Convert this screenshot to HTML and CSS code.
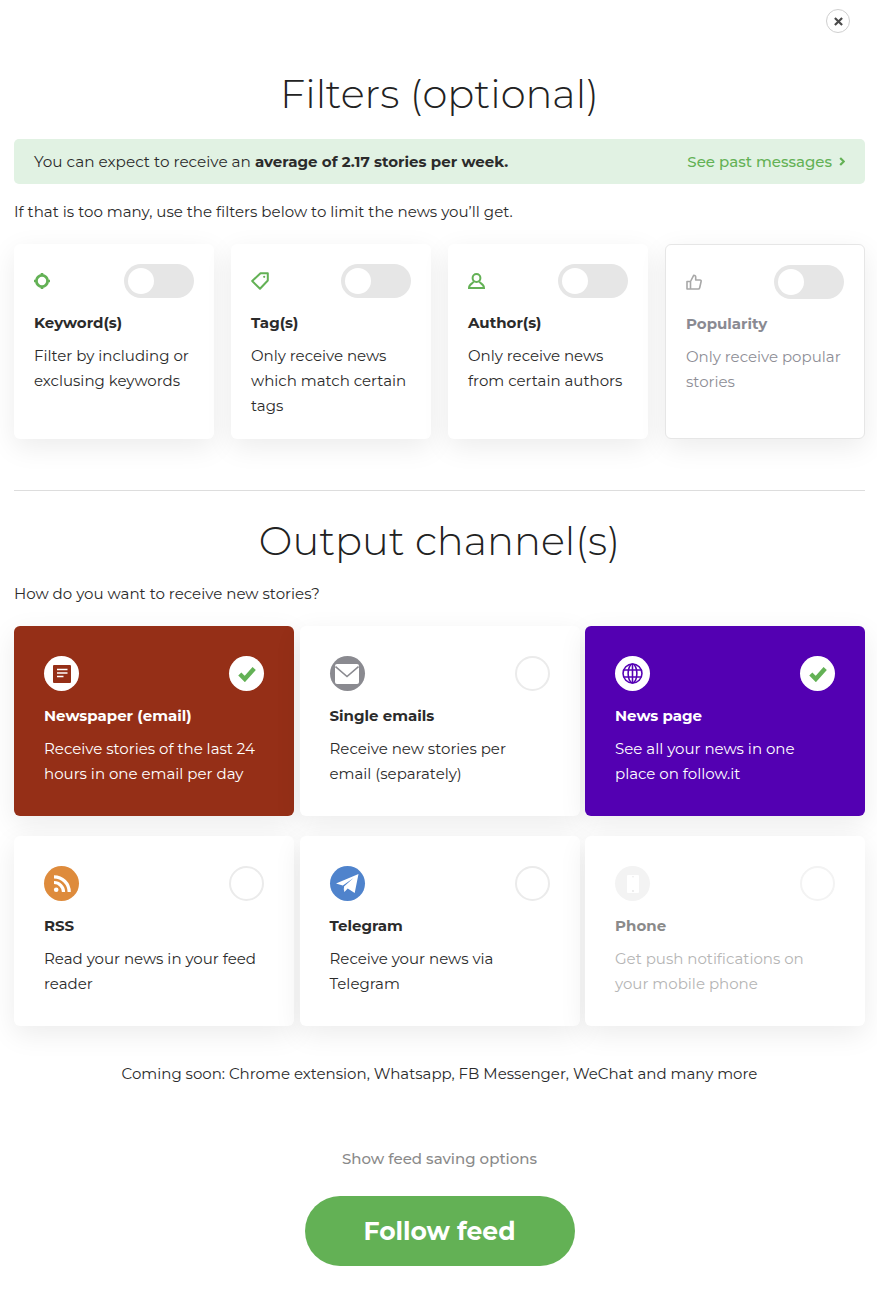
FILE: index.html
```html
<!DOCTYPE html>
<html lang="en">
<head>
<meta charset="utf-8">
<title>Filters</title>
<link rel="stylesheet" href="styles.css">
</head>
<body>
<main class="page">
  <div class="close-row">
    <button class="close" aria-label="Close"><svg viewBox="0 0 10 10" width="9" height="9"><path d="M1 1l8 8M9 1l-8 8" stroke="#4a4a4a" stroke-width="2.400" fill="none"/></svg></button>
  </div>
  <h1 class="title first">Filters (optional)</h1>
  <div class="notice">
    <span>You can expect to receive an <b>average of 2.17 stories per week.</b></span>
    <a class="past">See past messages <svg viewBox="0 0 6 10" width="6" height="9"><path d="M1 1l4 4-4 4" stroke="#63b155" stroke-width="2.400" fill="none"/></svg></a>
  </div>
  <p class="lead">If that is too many, use the filters below to limit the news you’ll get.</p>
  <section class="filters">
    <article class="fcard">
      <div class="fhead">
        <svg class="ficon" viewBox="0 0 16 16" width="16" height="16"><circle cx="8" cy="8" r="5.600" fill="none" stroke="#63b155" stroke-width="2.800"/><path d="M8 0v3M8 13v3M0 8h3M13 8h3" stroke="#63b155" stroke-width="2.600"/></svg>
        <span class="toggle"></span>
      </div>
      <h3>Keyword(s)</h3>
      <p>Filter by including or exclusing keywords</p>
    </article>
    <article class="fcard">
      <div class="fhead">
        <svg class="ficon" viewBox="0 0 18 18" width="18" height="18"><path d="M9.500 1.200h7.300v7.300l-7.800 8.300-7.800-7.800z" fill="none" stroke="#63b155" stroke-width="2" stroke-linejoin="round"/><circle cx="13.200" cy="4.800" r="1.100" fill="#63b155"/></svg>
        <span class="toggle"></span>
      </div>
      <h3>Tag(s)</h3>
      <p>Only receive news which match certain tags</p>
    </article>
    <article class="fcard">
      <div class="fhead">
        <svg class="ficon" viewBox="0 0 17 16" width="17" height="16"><circle cx="8.500" cy="5" r="3.900" fill="none" stroke="#63b155" stroke-width="2"/><path d="M5.800 8.500C5 10.500 1 10.800 1 15h15c0-4.200-4-4.500-4.800-6.500" fill="none" stroke="#63b155" stroke-width="2"/></svg>
        <span class="toggle"></span>
      </div>
      <h3>Author(s)</h3>
      <p>Only receive news from certain authors</p>
    </article>
    <article class="fcard muted">
      <div class="fhead">
        <svg class="ficon" viewBox="0 0 16 16" width="16" height="16"><path d="M1 7.500h3.500V15H1zM4.500 7.500L7.800 1.200c1.300 0 1.900.9 1.900 2V6h4.300c1 0 1.300.7 1.100 1.500l-1.400 6.200c-.2.900-.7 1.300-1.500 1.300H4.500" fill="none" stroke="#a8a8a8" stroke-width="1.600" stroke-linejoin="round"/></svg>
        <span class="toggle"></span>
      </div>
      <h3>Popularity</h3>
      <p>Only receive popular stories</p>
    </article>
  </section>
  <hr class="rule">
  <h1 class="title second">Output channel(s)</h1>
  <p class="lead tight">How do you want to receive new stories?</p>
  <section class="channels">
    <article class="ccard brown">
      <div class="chead">
        <span class="badge white"><svg viewBox="0 0 18 18" width="18" height="18"><rect width="18" height="18" rx="1" fill="#952f17"/><path d="M4 4.500h10.500M4 8h10.500M4 11.500h6.500" stroke="#fff" stroke-width="1.500"/></svg></span>
        <span class="radio on"><svg viewBox="0 0 18 16" width="18" height="16"><path d="M1.800 8l5 5L16.200 2.500" stroke="#63b155" stroke-width="4.400" fill="none"/></svg></span>
      </div>
      <h3>Newspaper (email)</h3>
      <p>Receive stories of the last 24 hours in one email per day</p>
    </article>
    <article class="ccard">
      <div class="chead">
        <span class="badge grey"><svg viewBox="0 0 24 20" width="24" height="20"><rect y="0" width="24" height="20" rx="2" fill="#fff"/><path d="M.5 2.500L12 12.500 23.500 2.500" stroke="#8a8a90" stroke-width="1.600" fill="none"/></svg></span>
        <span class="radio"></span>
      </div>
      <h3>Single emails</h3>
      <p>Receive new stories per email (separately)</p>
    </article>
    <article class="ccard purple">
      <div class="chead">
        <span class="badge white"><svg viewBox="0 0 24 24" width="21" height="21" fill="none" stroke="#5500b4" stroke-width="1.800"><circle cx="12" cy="12" r="10.800"/><ellipse cx="12" cy="12" rx="5" ry="10.800"/><path d="M2 8h20M2 16h20M12 1v22"/></svg></span>
        <span class="radio on"><svg viewBox="0 0 18 16" width="18" height="16"><path d="M1.800 8l5 5L16.200 2.500" stroke="#63b155" stroke-width="4.400" fill="none"/></svg></span>
      </div>
      <h3>News page</h3>
      <p>See all your news in one place on follow.it</p>
    </article>
    <article class="ccard">
      <div class="chead">
        <span class="badge orange"><svg viewBox="0 0 20 20" width="20" height="20"><circle cx="4.200" cy="15.800" r="2.300" fill="#fff"/><path d="M2 8.500a9.500 9.500 0 0 1 9.500 9.500M2 2.800a15.200 15.200 0 0 1 15.200 15.200" stroke="#fff" stroke-width="3.200" fill="none"/></svg></span>
        <span class="radio"></span>
      </div>
      <h3>RSS</h3>
      <p>Read your news in your feed reader</p>
    </article>
    <article class="ccard">
      <div class="chead">
        <span class="badge blue"><svg viewBox="0 0 24 22" width="24" height="22"><path fill="#fff" d="M1 10.500L23.500 1l-3.800 19-7-4.500-3.300 3.500-1.700-6.500z"/><path fill="#4f83cc" d="M9 13.500l9.500-8.500-11 7.800 1.600 5.500z"/></svg></span>
        <span class="radio"></span>
      </div>
      <h3>Telegram</h3>
      <p>Receive your news via Telegram</p>
    </article>
    <article class="ccard faded">
      <div class="chead">
        <span class="badge pale"><svg viewBox="0 0 12 18" width="12" height="18"><rect width="12" height="18" rx="1" fill="#fff"/><circle cx="6" cy="1.800" r=".7" fill="#e4e4e4"/><circle cx="6" cy="16" r=".9" fill="#e4e4e4"/></svg></span>
        <span class="radio"></span>
      </div>
      <h3>Phone</h3>
      <p>Get push notifications on your mobile phone</p>
    </article>
  </section>
  <p class="soon">Coming soon: Chrome extension, Whatsapp, FB Messenger, WeChat and many more</p>
  <p class="saving">Show feed saving options</p>
  <div class="cta"><button class="follow">Follow feed</button></div>
</main>
</body>
</html>
```
FILE: styles.css
```css
* { box-sizing: border-box; }
html, body { margin: 0; background: #fff; }
body { font-family: Montserrat, "Inter", "Noto Sans", sans-serif; color: #2b2b2b; font-size: 15px; }
.page { width: 877px; height: 1302px; padding: 0 12px 0 14px; overflow: hidden; }
.close-row { display: flex; justify-content: flex-end; height: 66px; padding: 9px 15px 0 0; }
.close { width: 24px; height: 24px; border-radius: 50%; border: 1px solid #cfcfcf; background: #fff; padding: 0; display: flex; align-items: center; justify-content: center; }
.title { margin: 0; text-align: center; font-weight: 300; font-size: 40px; line-height: 56px; color: #222; }
.notice { margin-top: 17px; height: 45px; background: #e1f2e3; border-radius: 5px; display: flex; align-items: center; justify-content: space-between; padding: 0 20px; font-size: 15.25px; }
.notice b { font-size: 15.05px; }
.past { color: #63b155; font-weight: 500; font-size: 15px; display: flex; gap: 7px; align-items: center; }
.lead { margin: 18px 0 0; font-size: 15.05px; line-height: 20px; }
.filters { display: grid; grid-template-columns: repeat(4, 200px); justify-content: space-between; margin-top: 22px; }
.fcard { height: 195px; padding: 20px; background: #fff; border-radius: 6px; box-shadow: 0 8px 28px rgba(0,0,0,.08); }
.fcard h3, .ccard h3 { margin: 0; font-size: 15px; font-weight: 700; line-height: 20px; }
.fcard p, .ccard p { margin: 10px 0 0; font-size: 15px; line-height: 25px; }
.fhead { display: flex; justify-content: space-between; align-items: center; height: 34px; margin-bottom: 15px; }
.toggle { width: 70px; height: 34px; border-radius: 17px; background: #e6e6e6; position: relative; }
.toggle::before { content: ""; position: absolute; left: 4px; top: 4px; width: 26px; height: 26px; border-radius: 50%; background: #fff; }
.muted { border: 1px solid #e6e6e6; color: #8e8e96; }
.muted h3 { color: #8a8a92; }
.rule { border: 0; border-top: 1px solid #ddd; margin: 51px 0 0; }
.second { margin-top: 22px; }
.tight { margin-top: 15px; }
.channels { display: grid; grid-template-columns: 280px 280px 280px; justify-content: space-between; row-gap: 20px; margin-top: 22px; }
.ccard { height: 190px; padding: 30px; background: #fff; border-radius: 6px; box-shadow: 0 8px 28px rgba(0,0,0,.08); }
.chead { display: flex; justify-content: space-between; margin-bottom: 15px; }
.badge, .radio { width: 35px; height: 35px; border-radius: 50%; display: flex; align-items: center; justify-content: center; }
.radio { border: 2px solid #ebebeb; }
.radio.on { background: #fff; border: 0; }
.brown { background: #952f17; color: #fff; }
.purple { background: #5300b2; color: #fff; }
.white { background: #fff; }
.grey { background: #8a8a90; }
.orange { background: #de8b3c; }
.blue { background: #4f83cc; }
.pale { background: #f3f3f3; }
.faded { color: #b5b5b5; }
.faded h3 { color: #8a8a8a; }
.faded .radio { border-color: #f3f3f3; }
.soon { margin: 38px 0 0; text-align: center; font-size: 15px; line-height: 20px; }
.saving { margin: 65px 0 0; text-align: center; font-size: 15px; line-height: 20px; color: #8a8a8a; font-weight: 500; }
.cta { display: flex; justify-content: center; margin-top: 27px; }
.follow { width: 270px; height: 70px; border-radius: 35px; border: 0; background: #63b155; color: #fff; font: 700 25px Montserrat, "Inter", sans-serif; }
```
